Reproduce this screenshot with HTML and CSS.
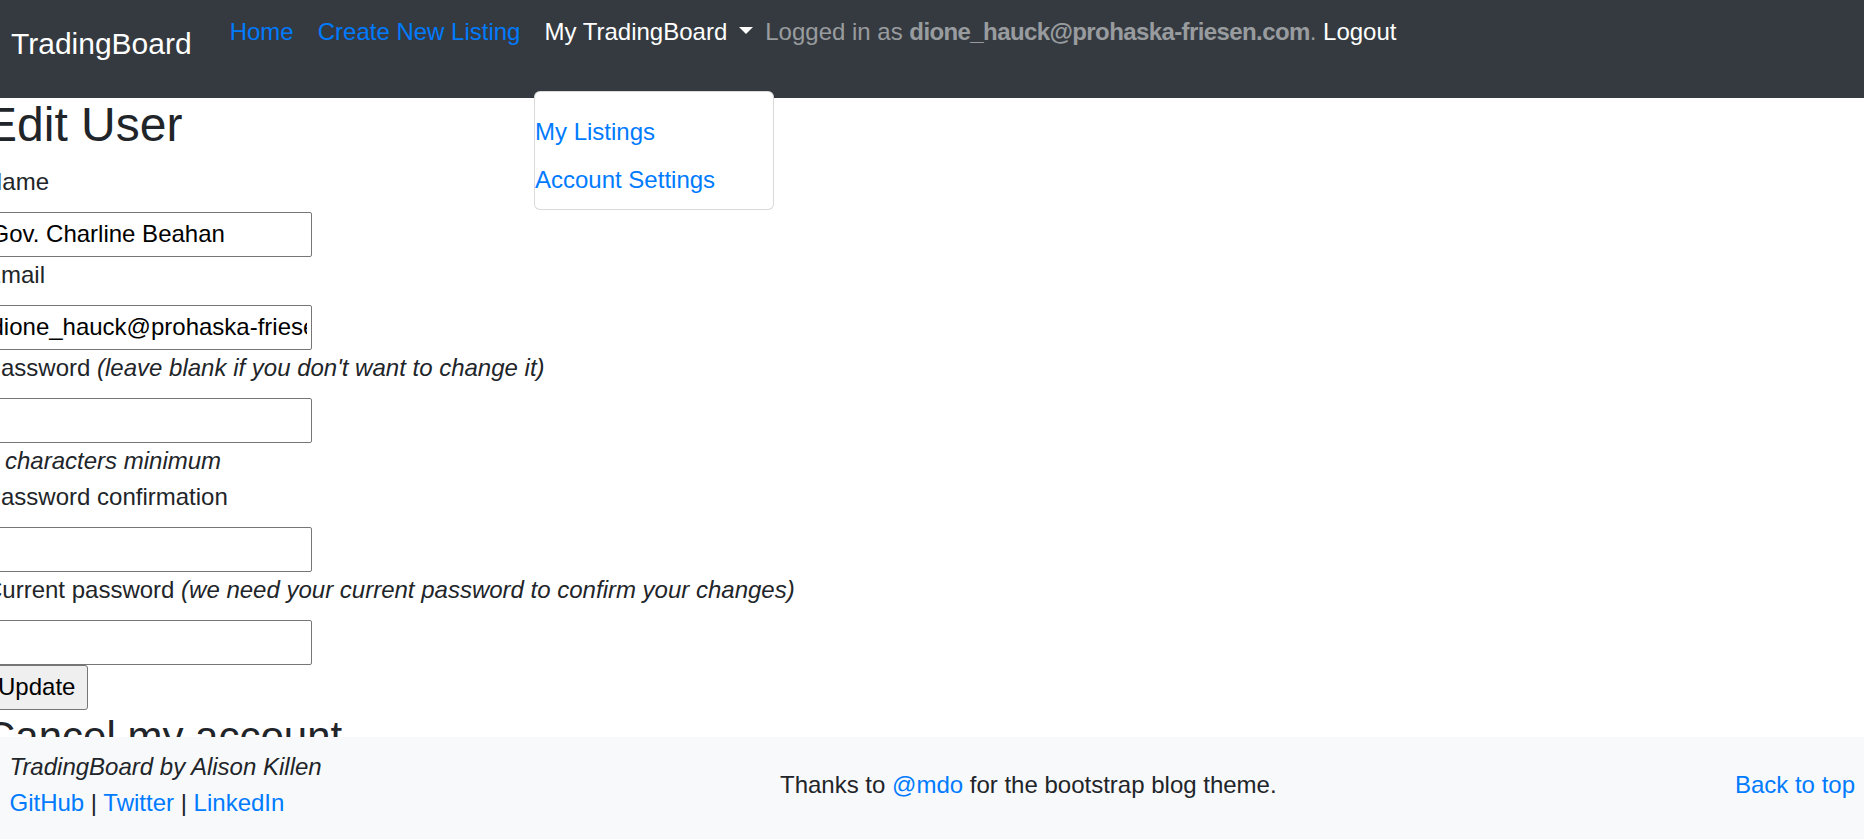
FILE: index.html
```html
<!DOCTYPE html>
<html lang="en">
<head>
<meta charset="utf-8">
<title>TradingBoard</title>
<link rel="stylesheet" href="styles.css">
</head>
<body>
<nav class="navbar">
  <a class="brand" href="#">TradingBoard</a>
  <ul class="nav">
    <li><a class="nav-link" href="#">Home</a></li>
    <li><a class="nav-link" href="#">Create New Listing</a></li>
    <li class="dropdown">
      <a class="nav-link toggle" href="#">My TradingBoard<span class="caret"></span></a>
      <div class="menu">
        <a class="menu-item" href="#">My Listings</a>
        <a class="menu-item" href="#">Account Settings</a>
      </div>
    </li>
    <li class="nav-text">Logged in as <strong>dione_hauck@prohaska-friesen.com</strong>. <a class="logout" href="#">Logout</a></li>
  </ul>
</nav>

<main class="content">
  <h2 class="title">Edit User</h2>
  <form class="form">
    <div class="field">
      <label class="label">Name</label>
      <input class="input" type="text" value="Gov. Charline Beahan">
    </div>
    <div class="field">
      <label class="label">Email</label>
      <input class="input" type="email" value="dione_hauck@prohaska-friesen.com">
    </div>
    <div class="field">
      <label class="label">Password <i>(leave blank if you don't want to change it)</i></label>
      <input class="input" type="password">
      <div class="hint"><em>8 characters minimum</em></div>
    </div>
    <div class="field">
      <label class="label">Password confirmation</label>
      <input class="input" type="password">
    </div>
    <div class="field">
      <label class="label">Current password <i>(we need your current password to confirm your changes)</i></label>
      <input class="input" type="password">
    </div>
    <div class="actions">
      <button class="button" type="button">Update</button>
    </div>
  </form>
  <h3 class="subtitle">Cancel my account</h3>
</main>

<footer class="footer">
  <div class="footer-row">
    <div class="footer-left">
      <div><em>TradingBoard by Alison Killen</em></div>
      <div><a href="#">GitHub</a> | <a href="#">Twitter</a> | <a href="#">LinkedIn</a></div>
    </div>
    <div class="footer-mid">Thanks to <a href="#">@mdo</a> for the bootstrap blog theme.</div>
    <div class="footer-right"><a href="#">Back to top</a></div>
  </div>
</footer>
</body>
</html>
```

FILE: styles.css
```css
* {
  box-sizing: border-box;
}

html,
body {
  margin: 0;
  padding: 0;
}

body {
  font-family: "Liberation Sans", Arial, sans-serif;
  font-size: 24px;
  line-height: 36px;
  color: #212529;
  background: #fff;
  overflow: hidden;
}

a {
  color: #007bff;
  text-decoration: none;
}

/* Navbar */
.navbar {
  display: flex;
  align-items: flex-start;
  height: 97.5px;
  background: #343a40;
  padding-left: 11px;
}

.brand {
  font-size: 30px;
  line-height: 45px;
  color: #fff;
  margin-top: 21px;
  margin-right: 26px;
  white-space: nowrap;
}

.nav {
  display: flex;
  list-style: none;
  margin: 2px 0 0;
  padding: 0;
}

.nav-link {
  display: block;
  padding: 12px;
  white-space: nowrap;
}

.toggle {
  color: #fff;
}

.caret {
  display: inline-block;
  margin-left: 12px;
  vertical-align: 6px;
  border-top: 7px solid #fff;
  border-left: 7px solid transparent;
  border-right: 7px solid transparent;
}

.dropdown {
  position: relative;
}

.menu {
  position: absolute;
  top: 89px;
  left: 1.5px;
  width: 240px;
  background: #fff;
  border: 1.5px solid rgba(0, 0, 0, 0.15);
  border-radius: 6px;
  padding: 16px 0 4.5px;
  z-index: 10;
}

.menu-item {
  display: block;
  padding: 6px 0;
  white-space: nowrap;
}

.nav-text {
  padding: 12px 0;
  color: rgba(255, 255, 255, 0.5);
  white-space: nowrap;
}

.nav-text strong {
  font-weight: 700;
  letter-spacing: -0.6px;
}

.logout {
  color: #fff;
}

/* Content */
.content {
  margin-left: -15px;
  margin-top: -3.5px;
}

.title {
  font-size: 48px;
  line-height: 57.6px;
  font-weight: 400;
  padding-top: 2px;
  margin: 0 0 10px;
}

.form {
  margin: 0;
}

.label {
  display: block;
  margin-bottom: 12px;
  white-space: nowrap;
}

.input {
  display: block;
  width: 327px;
  height: 45px;
  margin: 0;
  padding: 1.5px 4.5px;
  border: 1px solid #767676;
  border-radius: 2px;
  font-family: inherit;
  font-size: 24px;
  line-height: 36px;
  color: #000;
  background: #fff;
}

.hint {
  line-height: 36px;
}

.button {
  height: 45px;
  margin: 0;
  padding: 0 12px;
  border: 1px solid #767676;
  border-radius: 3px;
  background: #efefef;
  font-family: inherit;
  font-size: 24px;
  line-height: 36px;
  color: #000;
}

.actions {
  height: 45px;
}

.subtitle {
  font-size: 42px;
  line-height: 50.4px;
  font-weight: 400;
  padding-top: 2px;
  margin: 0 0 12px;
}

/* Footer */
.footer {
  position: fixed;
  left: 0;
  right: 0;
  bottom: 0;
  height: 102px;
  background: #f8f9fa;
  padding: 11.5px 9px 0 9.5px;
}

.footer-row {
  display: flex;
  justify-content: space-between;
  align-items: center;
  height: 72px;
}

.footer-left {
  white-space: nowrap;
}

.footer-mid {
  white-space: nowrap;
}

.footer-right {
  white-space: nowrap;
}
```
